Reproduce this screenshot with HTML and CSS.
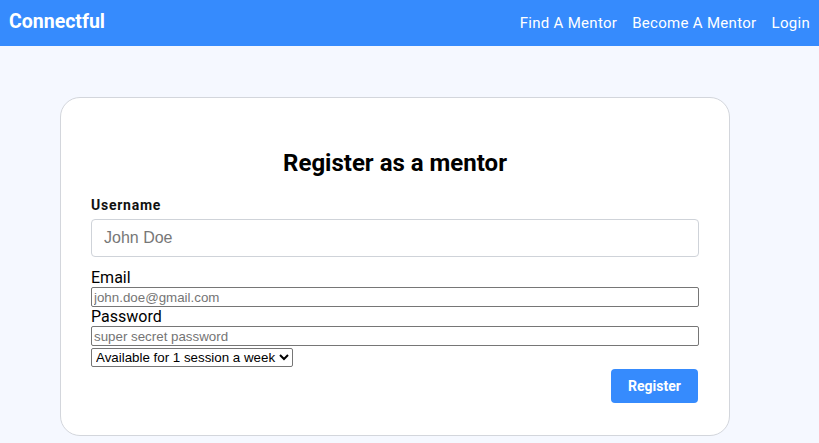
FILE: index.html
```html
<!DOCTYPE html>
<html>
<head>
<meta charset="utf-8">
<link rel="stylesheet" href="styles.css">
</head>
<body>
<header class="topbar">
  <div class="brand">Connectful</div>
  <nav class="nav">
    <a href="#">Find A Mentor</a>
    <a href="#">Become A Mentor</a>
    <a href="#">Login</a>
  </nav>
</header>
<main class="main">
  <section class="card">
    <h1 class="title">Register as a mentor</h1>
    <form class="form">
      <label class="label-strong">Username</label>
      <input class="input-big" type="text" placeholder="John Doe">
      <label class="label-plain">Email</label>
      <input class="input-raw" type="text" placeholder="john.doe@gmail.com">
      <label class="label-plain">Password</label>
      <input class="input-raw" type="password" placeholder="super secret password">
      <select class="select-raw">
        <option>Available for 1 session a week</option>
      </select>
      <div class="actions">
        <button class="btn" type="button">Register</button>
      </div>
    </form>
  </section>
</main>
</body>
</html>
```
FILE: styles.css
```css
html, body { margin: 0; padding: 0; }
body {
  background: #f5f8ff;
  font-family: Roboto, "Liberation Sans", sans-serif;
  height: 443px;
  overflow: hidden;
}
.topbar {
  height: 46px;
  background: #368bfd;
  display: flex;
  align-items: center;
  justify-content: space-between;
  padding: 0 9px;
  color: #fff;
}
.brand {
  font-weight: 700;
  font-size: 19.5px;
  margin-top: -3px;
}
.nav { display: flex; gap: 15px; }
.nav a {
  color: #fff;
  text-decoration: none;
  font-size: 15px;
  letter-spacing: 0.3px;
}
.main { padding: 51px 0 0 60px; }
.card {
  width: 608px;
  background: #fff;
  border: 1px solid #d3d6dc;
  border-radius: 20px;
  padding: 51px 30px 32px;
}
.title {
  margin: 0 0 20px;
  text-align: center;
  font-size: 24px;
  font-weight: 700;
  color: #000;
}
.form { display: flex; flex-direction: column; align-items: flex-start; }
.label-strong {
  font-size: 14px;
  font-weight: 700;
  letter-spacing: 0.75px;
  color: #111;
  margin-bottom: 6px;
}
.input-big {
  box-sizing: border-box;
  width: 100%;
  height: 38px;
  border: 1px solid #cfd3d9;
  border-radius: 4px;
  padding: 0 12px;
  font-family: "Liberation Sans", Arial, sans-serif;
  font-size: 16px;
  margin: 0 0 11px;
}
.input-big::placeholder { color: #777; }
.label-plain {
  font-size: 16px;
  color: #000;
  line-height: 19px;
}
.input-raw {
  box-sizing: border-box;
  width: 100%;
  height: 20px;
  margin: 0;
  padding: 1px 2px;
  border: 1px solid #767676;
  border-radius: 2px;
  font-family: "Liberation Sans", Arial, sans-serif;
  font-size: 13.33px;
}
.input-raw::placeholder { color: #757575; }
.select-raw {
  margin: 2px 0 0;
  height: 19px;
  font-family: "Liberation Sans", Arial, sans-serif;
  font-size: 13.33px;
  border: 1px solid #767676;
  border-radius: 2px;
  background: #fff;
  color: #000;
}
.actions { width: 100%; display: flex; justify-content: flex-end; margin-top: 2px; }
.btn {
  margin-right: 1px;
  width: 87px;
  height: 34px;
  border: none;
  border-radius: 4px;
  background: #368bfd;
  color: #fff;
  font-family: Roboto, "Liberation Sans", sans-serif;
  font-weight: 700;
  font-size: 14px;
}
```
